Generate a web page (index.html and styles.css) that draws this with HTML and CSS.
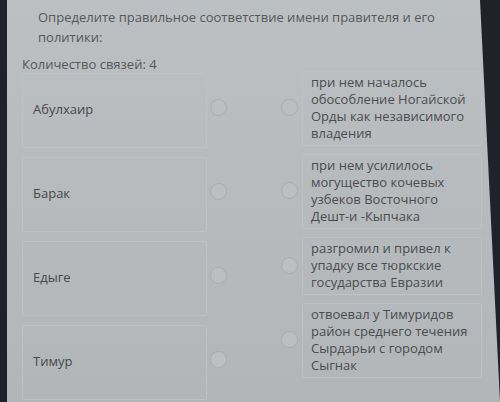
FILE: index.html
```html
<!DOCTYPE html>
<html lang="ru">
<head>
<meta charset="utf-8">
<title>Соответствие</title>
<link rel="stylesheet" href="styles.css">
</head>
<body>
<div class="screen">
  <p class="question">Определите правильное соответствие имени правителя и его политики:</p>
  <p class="count">Количество связей: 4</p>
  <div class="board">
    <div class="col-left">
      <div class="left-item"><div class="name-card">Абулхаир</div><span class="dot"></span></div>
      <div class="left-item"><div class="name-card">Барак</div><span class="dot"></span></div>
      <div class="left-item"><div class="name-card">Едыге</div><span class="dot"></span></div>
      <div class="left-item"><div class="name-card">Тимур</div><span class="dot"></span></div>
    </div>
    <div class="col-right">
      <div class="right-item"><span class="dot"></span><div class="desc-card">при нем началось обособление Ногайской Орды как независимого владения</div></div>
      <div class="right-item"><span class="dot"></span><div class="desc-card">при нем усилилось могущество кочевых узбеков Восточного Дешт-и -Кыпчака</div></div>
      <div class="right-item"><span class="dot"></span><div class="desc-card">разгромил и привел к упадку все тюркские государства Евразии</div></div>
      <div class="right-item"><span class="dot"></span><div class="desc-card">отвоевал у Тимуридов район среднего течения Сырдарьи с городом Сыгнак</div></div>
    </div>
  </div>
</div>
</body>
</html>
```

FILE: styles.css
```css
* { box-sizing: border-box; }

html, body {
  margin: 0;
  padding: 0;
  width: 500px;
  height: 402px;
  overflow: hidden;
  background: #1f2327;
}

.screen {
  margin-left: 7px;
  width: 493px;
  height: 402px;
  padding: 7px 0 0 15px;
  background: linear-gradient(180deg, #bdc0c2 0%, #b8bbbd 45%, #b3b6b8 100%);
  clip-path: polygon(0 0, 473px 0, 493px 402px, 0 402px);
  font-family: "Open Sans", "Liberation Sans", sans-serif;
  font-size: 13px;
  color: #4c4e52;
}

.question {
  margin: 0;
  padding-left: 16px;
  width: 450px;
  line-height: 20px;
  color: #55575b;
}

.count {
  margin: 7px 0 0 0;
  line-height: 20px;
  color: #55575b;
}

.board {
  display: flex;
  gap: 54px;
  margin-top: -1px;
}

.col-left {
  display: flex;
  flex-direction: column;
  gap: 9px;
}

.left-item {
  display: flex;
  align-items: center;
  height: 75px;
}

.name-card {
  width: 185px;
  height: 100%;
  display: flex;
  align-items: center;
  padding-left: 10px;
  padding-bottom: 3px;
  border: 1px solid #bfc2c4;
  border-radius: 2px;
  color: #46484c;
}

.left-item .dot { margin-left: 3px; margin-top: -6px; }

.col-right {
  display: flex;
  flex-direction: column;
  gap: 8px;
  margin-top: -2px;
}

.right-item {
  display: flex;
  align-items: center;
}

.right-item .dot { margin-right: 4px; margin-top: -2px; }

.desc-card {
  width: 180px;
  padding: 2px 2px 3px 8px;
  line-height: 17px;
  border: 1px solid #bfc2c4;
  border-radius: 2px;
  color: #4a4c50;
}

.dot {
  flex: none;
  width: 17px;
  height: 17px;
  border-radius: 50%;
  border: 1.5px solid #a9acae;
  background: #bcbfc1;
}
```
